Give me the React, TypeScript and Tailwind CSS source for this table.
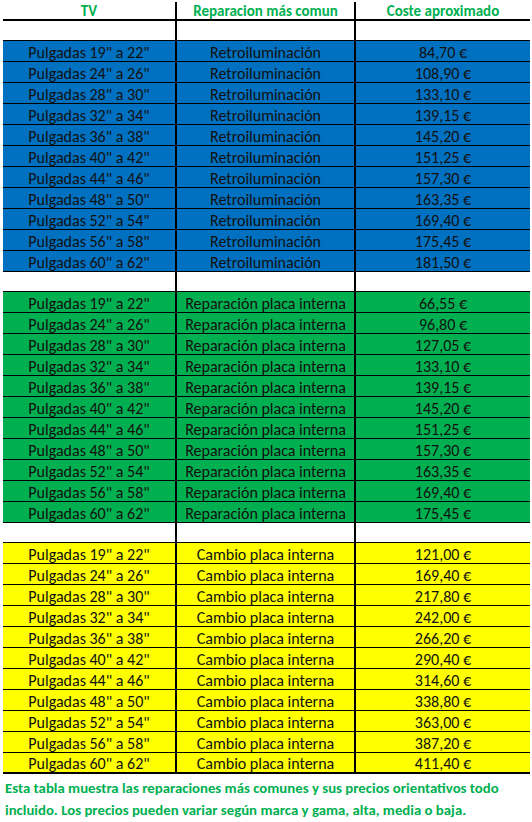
import React from "react";

const sizes = [
  '19" a 22"',
  '24" a 26"',
  '28" a 30"',
  '32" a 34"',
  '36" a 38"',
  '40" a 42"',
  '44" a 46"',
  '48" a 50"',
  '52" a 54"',
  '56" a 58"',
  '60" a 62"',
];

const groups = [
  {
    bg: "bg-[#0070c0]",
    repair: "Retroiluminación",
    prices: ["84,70", "108,90", "133,10", "139,15", "145,20", "151,25", "157,30", "163,35", "169,40", "175,45", "181,50"],
  },
  {
    bg: "bg-[#00b050]",
    repair: "Reparación placa interna",
    prices: ["66,55", "96,80", "127,05", "133,10", "139,15", "145,20", "151,25", "157,30", "163,35", "169,40", "175,45"],
  },
  {
    bg: "bg-[#ffff00]",
    repair: "Cambio placa interna",
    prices: ["121,00", "169,40", "217,80", "242,00", "266,20", "290,40", "314,60", "338,80", "363,00", "387,20", "411,40"],
  },
];

const font = { fontFamily: "Carlito, Lato, 'Liberation Sans', sans-serif" };

function EmptyRow() {
  return (
    <div className="grid grid-cols-[174px_179px_174px] h-[20px] border-b border-black">
      <div className="border-r-2 border-black" />
      <div className="border-r-2 border-black" />
      <div />
    </div>
  );
}

export default function App() {
  return (
    <div className="w-[532px] h-[822px] bg-white text-[#111] text-[16px]" style={font}>
      <div className="ml-[3px] w-[527px]">
        <div className="grid grid-cols-[174px_179px_174px] h-[21px] border-b-2 border-black font-bold text-[15px] text-[#00b050]">
          <div className="mt-[2px] pt-[1px] border-r-2 border-black flex items-center justify-center leading-[17px]">TV</div>
          <div className="mt-[2px] pt-[1px] border-r-2 border-black flex items-center justify-center leading-[17px]">Reparacion más comun</div>
          <div className="mt-[2px] pt-[1px] flex items-center justify-center leading-[17px]">Coste aproximado</div>
        </div>
        {groups.map((g, gi) => (
          <div key={gi}>
            <EmptyRow />
            {sizes.map((s, i) => (
              <div
                key={i}
                className={`grid grid-cols-[174px_179px_174px] h-[21px] ${g.bg} ${
                  gi === 2 && i === 10 ? "border-b-2" : "border-b"
                } border-black`}
              >
                <div className="pt-[3px] border-r-2 border-black flex items-center justify-center leading-none">
                  Pulgadas {s}
                </div>
                <div className="pt-[3px] border-r-2 border-black flex items-center justify-center leading-none whitespace-nowrap">
                  {g.repair}
                </div>
                <div className="pt-[3px] flex items-center justify-center leading-none">{g.prices[i]} €</div>
              </div>
            ))}
          </div>
        ))}
      </div>
      <div className="pl-[5px] pt-[3px] font-bold text-[14.8px] text-[#00b050] leading-[22px] whitespace-nowrap">
        <div>Esta tabla muestra las reparaciones más comunes y sus precios orientativos todo</div>
        <div>incluido. Los precios pueden variar según marca y gama, alta, media o baja.</div>
      </div>
    </div>
  );
}
